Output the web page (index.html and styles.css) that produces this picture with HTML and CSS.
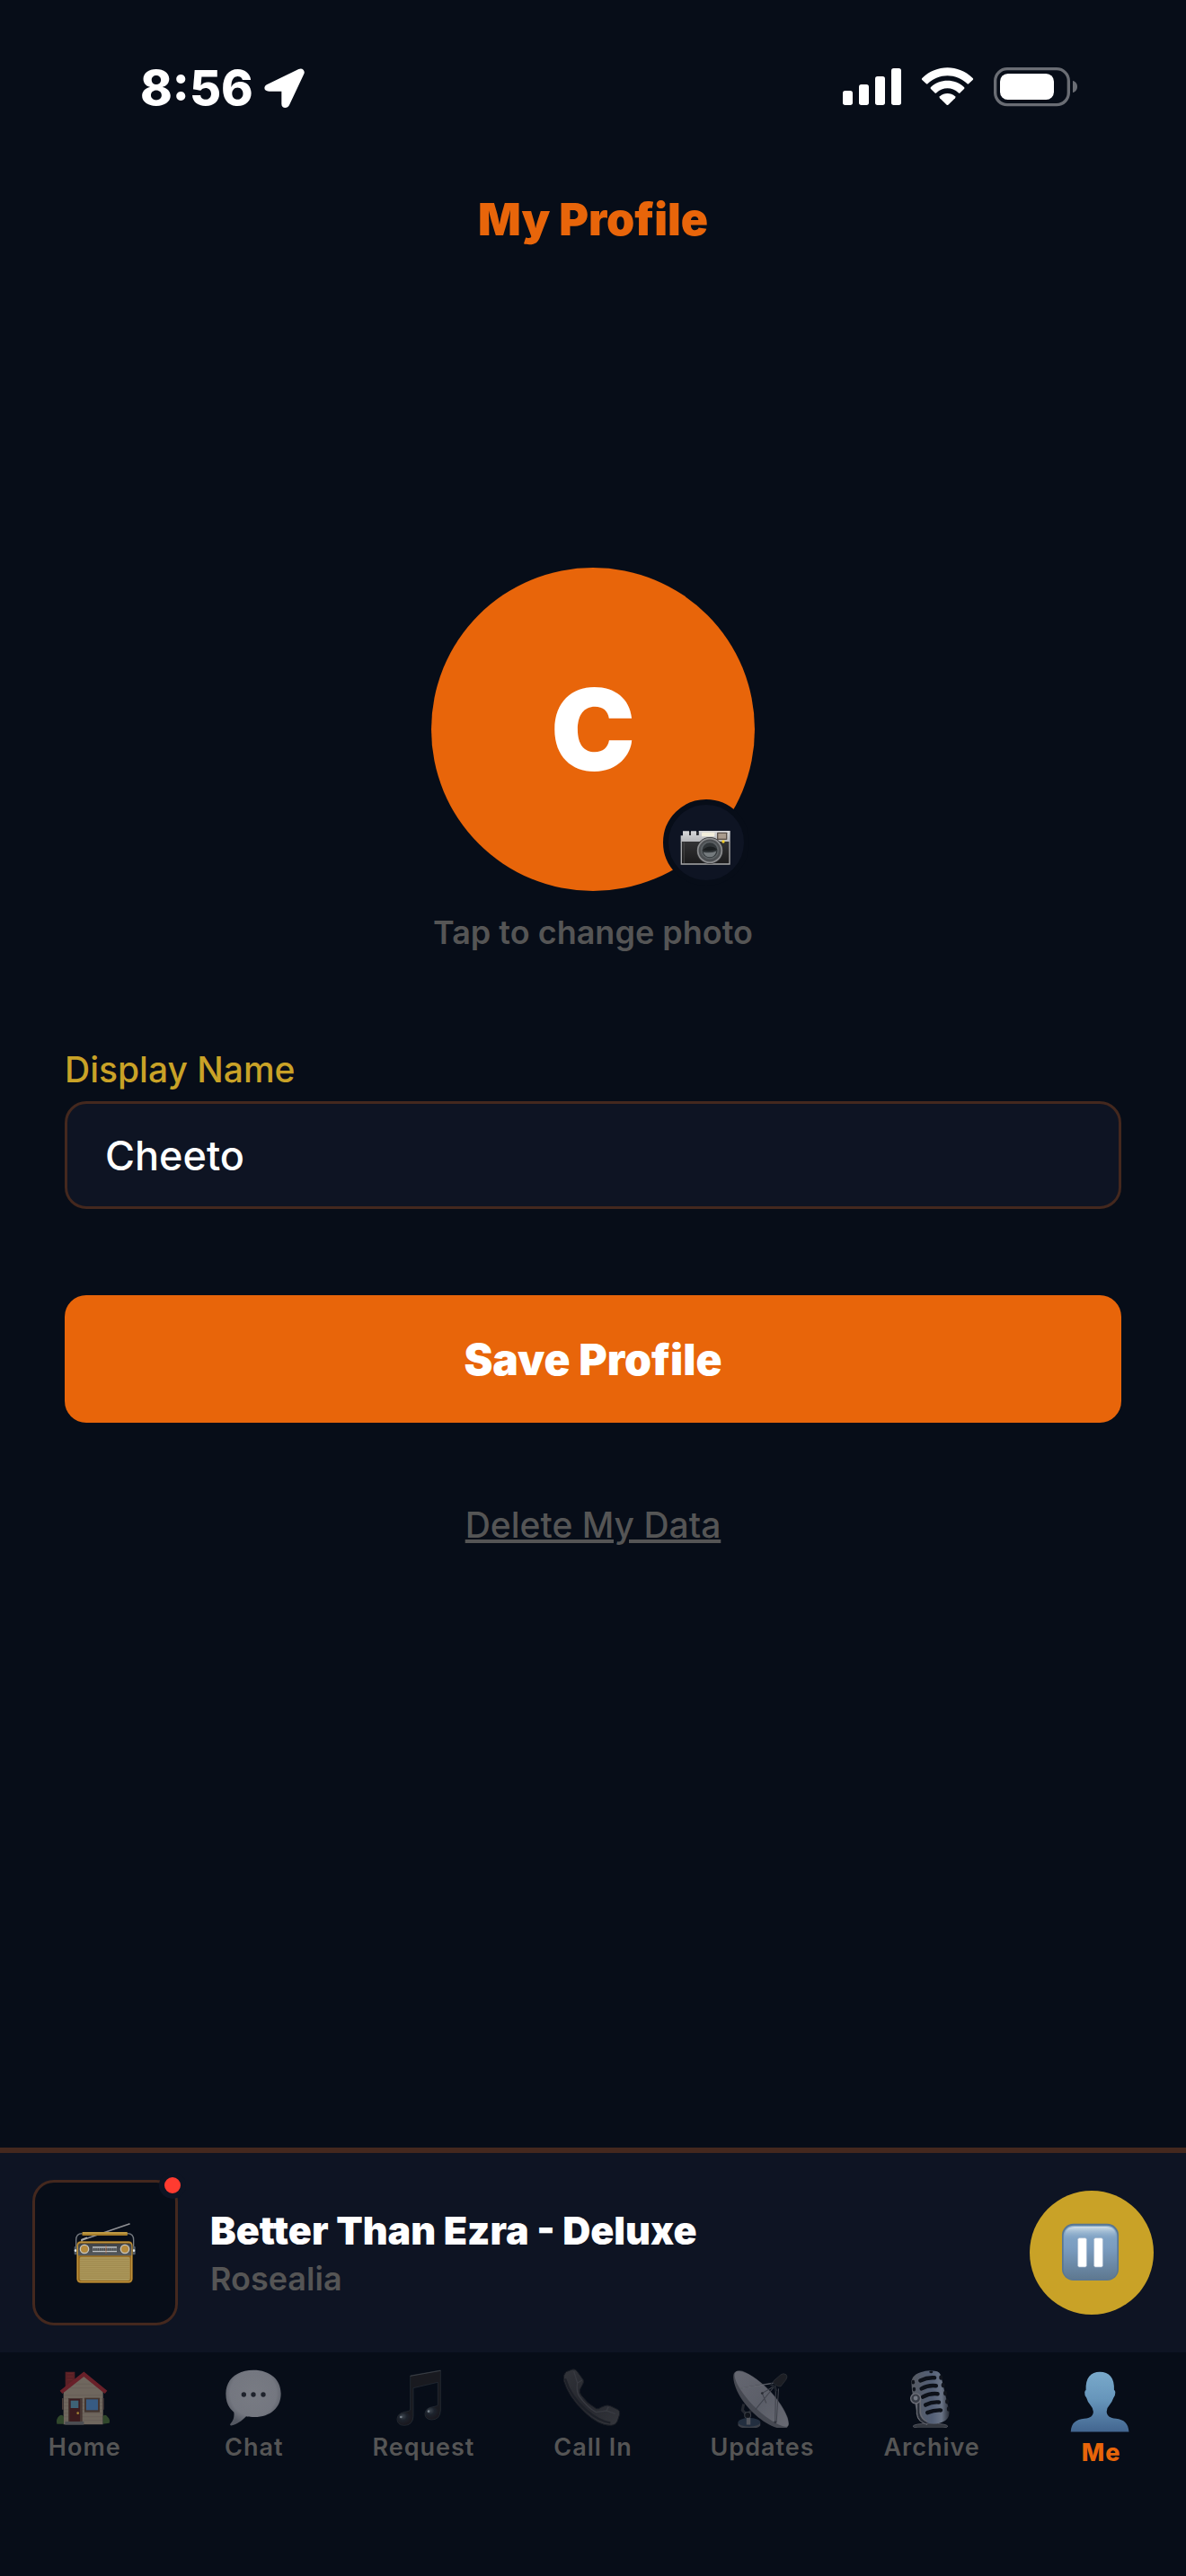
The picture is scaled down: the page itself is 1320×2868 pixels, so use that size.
FILE: index.html
```html
<!DOCTYPE html>
<html lang="en">
<head>
<meta charset="utf-8">
<meta name="viewport" content="width=device-width, initial-scale=1">
<title>My Profile</title>
<link rel="stylesheet" href="styles.css">
</head>
<body>
<div class="status-bar">
  <div class="clock">
    <span>8:56</span>
    <svg class="location-icon" viewBox="496 75 135 138" aria-hidden="true"><path d="M506 132 L611 81 C623 75 634 85 629 97 L580 201 C574 214 554 213 554 197 V155 H512 C495 155 492 139 506 132Z" fill="#fff"/></svg>
  </div>
  <svg class="status-icons" viewBox="81 75 783 138" aria-hidden="true">
    <g fill="#fff">
      <rect x="81" y="153" width="33" height="48" rx="8"/><rect x="135" y="132" width="33" height="69" rx="8"/><rect x="189" y="105" width="33" height="96" rx="8"/><rect x="243" y="78" width="33" height="123" rx="8"/>
      <path d="M346 111 Q343 114 346 117 L359 129 Q362 132 365 129 C402 94 459 94 496 129 Q499 132 502 129 L515 117 Q518 114 515 111 C467 64 394 64 346 111Z"/>
      <path d="M375 141 Q372 144 375 147 L388 160 Q391 163 394 160 C415 140 446 140 467 160 Q470 163 473 160 L486 147 Q489 144 486 141 C455 112 406 112 375 141Z"/>
      <path d="M405 172 Q402 175 405 178 L428 200 Q430.500 202 433 200 L456 178 Q459 175 456 172 C441 159 420 159 405 172Z"/>
      <rect x="606" y="96" width="180" height="87" rx="26"/>
    </g>
    <g fill="#6a6d74"><path d="M849 120 C869 124 869 155 849 159Z"/></g>
    <rect x="590" y="80" width="245" height="120" rx="40" fill="none" stroke="#6a6d74" stroke-width="10"/>
  </svg>
</div>

<header class="page-header"><h1>My Profile</h1></header>

<main class="profile">
  <button class="avatar" type="button" aria-label="Change photo">
    <span class="avatar-initial">C</span>
    <span class="camera-badge">
      <svg viewBox="852 108 252 252" aria-hidden="true">
        <defs>
          <linearGradient id="camTop" x1="0" y1="0" x2="0" y2="1"><stop offset="0" stop-color="#d8d8da"/><stop offset="1" stop-color="#b4b5b8"/></linearGradient>
          <linearGradient id="camBody" x1="0" y1="0" x2="0" y2="1"><stop offset="0" stop-color="#333335"/><stop offset="1" stop-color="#19191a"/></linearGradient>
        </defs>
        <path d="M900 196 H921 V209 H927 V196 H945 V209 H953 V195 H1058 V233 H893 V211 H900Z" fill="url(#camTop)"/>
        <path d="M921 198h6v12h-6zM945 198h7v12h-7z" fill="#2b2c30"/>
        <rect x="963" y="200" width="43" height="14" rx="2" fill="#f2eedc"/>
        <rect x="1014" y="200" width="34" height="25" rx="2" fill="#5b5149"/><rect x="1018" y="204" width="26" height="17" fill="#a99b8d"/>
        <rect x="893" y="231" width="165" height="78" fill="url(#camBody)"/>
        <path d="M895 231V306H1056V231" fill="none" stroke="#a7a8aa" stroke-width="4"/>
        <path d="M904 233V303" stroke="#555" stroke-width="2"/>
        <circle cx="990" cy="261" r="45" fill="#303133"/><circle cx="990" cy="261" r="40" fill="#4c4f52" stroke="#8c8d8f" stroke-width="5"/>
        <circle cx="990" cy="260" r="28" fill="#303538" stroke="#5c6164" stroke-width="5"/>
        <path d="M966 260q24-23 49-3q-18 7-49 3z" fill="#1a1e20"/><path d="M968 266q24 5 44-3q-5 19-22 20q-16 0-22-17z" fill="#747a7d"/>
        <circle cx="1035" cy="231" r="5" fill="#f4cf27"/>
      </svg>
    </span>
  </button>
  <p class="hint">Tap to change photo</p>
  <form class="profile-form">
    <label for="display-name">Display Name</label>
    <input id="display-name" type="text" value="Cheeto">
    <button class="save" type="button">Save Profile</button>
  </form>
  <a class="delete-link" href="#delete">Delete My Data</a>
</main>

<section class="player" aria-label="Now playing">
  <div class="artwork">
    <svg viewBox="240 303 222 222" aria-hidden="true">
      <defs><linearGradient id="radioTop" x1="0" y1="0" x2="0" y2="1"><stop offset="0" stop-color="#3e4145"/><stop offset="1" stop-color="#55595c"/></linearGradient></defs>
      <path d="M276 371L432 318" stroke="#909195" stroke-width="5" stroke-linecap="round"/><path d="M273 379v-8l18-7" fill="none" stroke="#aaa" stroke-width="5"/>
      <path d="M254 402V372Q254 350 274 350M446 402V372Q446 350 426 350" fill="none" stroke="#777c82" stroke-width="4"/>
      <rect x="274" y="345" width="152" height="12" rx="3" fill="#a67e2b"/><path d="M276 348H424" stroke="#d5b45d" stroke-width="3"/>
      <rect x="248" y="393" width="10" height="28" rx="3" fill="#55606b"/><rect x="442" y="393" width="10" height="28" rx="3" fill="#55606b"/><circle cx="252" cy="407" r="4" fill="#e0e5e8"/><circle cx="447" cy="407" r="4" fill="#e0e5e8"/>
      <rect x="256" y="376" width="187" height="139" rx="13" fill="#97691c"/>
      <rect x="259" y="379" width="181" height="133" rx="10" fill="none" stroke="#c79c46" stroke-width="3"/>
      <path d="M261 424V392Q261 383 270 383H430Q439 383 439 392V424Z" fill="url(#radioTop)"/>
      <rect x="266" y="428" width="168" height="79" rx="6" fill="#ac985b"/>
      <path d="M267 436H433M267 443H433M267 450H433M267 457H433M267 464H433M267 471H433M267 478H433M267 485H433M267 492H433M267 499H433" stroke="#9a8348" stroke-width="2"/>
      <g fill="#b68a3c" stroke="#c9c6bd" stroke-width="4"><circle cx="282" cy="402" r="14"/><circle cx="417" cy="402" r="14"/></g>
      <path d="M309 396H390M309 410H390" stroke="#c0c2c3" stroke-width="4"/><path d="M309 401H390M309 405H390" stroke="#85898c" stroke-width="3" stroke-dasharray="3 4"/><path d="M354 390V417" stroke="#b86a41" stroke-width="2"/>
    </svg>
    <span class="live-dot"></span>
  </div>
  <div class="track"><p class="track-title">Better Than Ezra - Deluxe</p><p class="track-artist">Rosealia</p></div>
  <button class="pause" type="button" aria-label="Pause">
    <svg viewBox="540 309 210 210" aria-hidden="true">
      <defs>
        <linearGradient id="pauseFace" x1="0" y1="0" x2="0" y2="1"><stop offset="0" stop-color="#84a8c8"/><stop offset=".4" stop-color="#7b9dc1"/><stop offset="1" stop-color="#5e7890"/></linearGradient>
        <linearGradient id="pauseShine" x1="0" y1="0" x2="0" y2="1"><stop offset="0" stop-color="#d3e0e9"/><stop offset="1" stop-color="#84a7c7" stop-opacity="0"/></linearGradient>
      </defs>
      <rect x="546" y="317" width="189" height="190" rx="38" fill="#587693"/><rect x="551" y="323" width="179" height="181" rx="34" fill="url(#pauseFace)"/>
      <path d="M555 370V360Q555 327 590 327H692Q726 327 726 360V370Z" fill="url(#pauseShine)"/>
      <g fill="#fff" stroke="#b1c0d2" stroke-width="2"><rect x="599" y="365" width="29" height="97" rx="5"/><rect x="653" y="365" width="29" height="97" rx="5"/></g>
    </svg>
  </button>
</section>

<nav class="tab-bar" aria-label="Main">
  <a href="#home"><svg viewBox="183 111 198 198" aria-hidden="true">
    <path d="M218 122H250V155L218 180Z" fill="#592025"/><path d="M224 128h20M224 138h20M224 148h18" stroke="#702a2e" stroke-width="2"/>
    <path d="M212 298V184L280 132L344 184V298Z" fill="#6f675e"/><path d="M214 200H342M214 212H342M214 224H342M214 236H342M214 248H342M214 260H342M214 272H342M214 284H342M235 176H322M252 163H306" stroke="#625b54" stroke-width="1.500"/>
    <path d="M204 190L280 130L354 190" fill="none" stroke="#692029" stroke-width="13" stroke-linejoin="miter"/>
    <path d="M207 210h5v38h-5zM343 210h4v38h-4z" fill="#493c39"/>
    <rect x="228" y="210" width="47" height="78" fill="#473733"/><rect x="232" y="213" width="35" height="75" fill="#3b1b1e"/><rect x="236" y="218" width="26" height="25" fill="#3e6276"/><circle cx="260" cy="260" r="4" fill="#a18132"/>
    <rect x="282" y="209" width="51" height="48" fill="#443630"/><rect x="288" y="214" width="39" height="36" fill="#375b83"/>
    <path d="M190 296Q186 280 197 270Q207 262 213 272V296ZM344 296V269Q353 263 359 272Q369 281 365 293Z" fill="#30472b"/><path d="M217 288h63v11h-63z" fill="#4b4d52"/>
  </svg><span>Home</span></a>
  <a href="#chat"><svg viewBox="750 111 198 198" aria-hidden="true">
    <defs><radialGradient id="bubble" cx=".5" cy=".42" r=".58"><stop offset="0" stop-color="#787b83"/><stop offset=".72" stop-color="#747780"/><stop offset="1" stop-color="#545862"/></radialGradient></defs>
    <path d="M846 116C902 116 938 148 938 195C938 242 903 273 850 273C840 273 831 273 822 271C808 286 789 299 775 301Q766 302 769 296C780 285 783 271 781 257C763 243 754 222 754 195C754 148 790 116 846 116Z" fill="url(#bubble)"/><g fill="#1f232c"><circle cx="814" cy="198" r="8"/><circle cx="846" cy="198" r="8"/><circle cx="879" cy="198" r="8"/></g>
  </svg><span>Chat</span></a>
  <a href="#request"><svg viewBox="115 111 198 198" aria-hidden="true">
    <defs><radialGradient id="note" cx=".35" cy=".3" r=".8"><stop offset="0" stop-color="#3e464f"/><stop offset=".4" stop-color="#1c222c"/><stop offset="1" stop-color="#18151b"/></radialGradient></defs>
    <path d="M171 135L272 117V252Q270 282 242 282Q220 281 220 262Q221 242 247 239Q258 238 263 233V157L181 176V271Q179 301 150 301Q127 300 127 280Q128 260 153 256Q167 255 171 249Z" fill="#191a20" stroke="#28313a" stroke-width="2"/>
    <ellipse cx="152" cy="279" rx="23" ry="20" fill="url(#note)"/><ellipse cx="244" cy="260" rx="23" ry="20" fill="url(#note)"/><path d="M171 136L272 118" stroke="#393d44" stroke-width="3"/><circle cx="140" cy="273" r="4" fill="#757f88"/><circle cx="232" cy="254" r="4" fill="#757f88"/>
  </svg><span>Request</span></a>
  <a href="#call"><svg viewBox="681 111 198 198" aria-hidden="true">
    <defs><linearGradient id="phone" x1="0" y1="0" x2="1" y2="1"><stop offset="0" stop-color="#32343a"/><stop offset=".5" stop-color="#25272e"/><stop offset="1" stop-color="#34363c"/></linearGradient></defs>
    <path d="M690 122L711 114Q721 112 726 119L747 148Q751 155 746 163L736 182Q734 191 740 199Q760 228 791 245Q799 247 806 241L821 235Q828 232 838 236L863 248Q871 253 869 264L862 286Q857 300 840 301Q798 302 749 254Q698 205 682 151Q680 131 690 122Z" fill="url(#phone)" stroke="#171b23" stroke-width="3"/>
    <path d="M687 145Q705 205 759 251Q799 287 838 292" fill="none" stroke="#1d2028" stroke-width="7"/><path d="M716 120L728 159Q723 188 735 205Q759 239 790 257L825 252L855 262M728 159L744 150M825 252L832 239" fill="none" stroke="#383a41" stroke-width="4"/>
  </svg><span>Call In</span></a>
  <a href="#updates"><svg viewBox="103 107 192 192" aria-hidden="true">
    <defs><linearGradient id="dish" x1="0" y1="0" x2="1" y2="1"><stop offset="0" stop-color="#656771"/><stop offset=".55" stop-color="#5b5e68"/><stop offset="1" stop-color="#686a73"/></linearGradient></defs>
    <path d="M137 222L133 242L149 259L160 244" fill="none" stroke="#242830" stroke-width="9"/><circle cx="150" cy="258" r="10" fill="#10141b" stroke="#3a3e46" stroke-width="3"/>
    <path d="M119 281V291C124 305 187 305 191 291V281Z" fill="#3b3f48"/><ellipse cx="155" cy="281" rx="36" ry="14" fill="#222e3f"/><path d="M146 267h13v22h-13z" fill="#51545c"/>
    <path d="M105 124C111 112 126 110 146 121C200 148 261 213 280 267Q288 300 269 302C220 305 153 246 124 196C106 164 101 137 105 124Z" fill="#464952"/>
    <path d="M116 116C140 111 181 139 220 179C262 222 286 274 282 290C278 302 250 292 218 269C163 231 113 166 108 133Q106 119 116 116Z" fill="url(#dish)"/>
    <path d="M128 171L236 153M197 187L238 163L176 239M241 164L239 281M250 172L243 282M197 187L210 219" fill="none" stroke="#40434c" stroke-width="3"/><path d="M128 171L232 155" stroke="#787a82" stroke-width="2"/>
    <path d="M233 148L257 127Q265 121 274 126Q281 133 274 143L257 165Q248 166 243 161Q232 158 233 148Z" fill="#1c1e24" stroke="#30343b" stroke-width="2"/><path d="M224 157l15 12 4 12" fill="none" stroke="#20252e" stroke-width="8"/><circle cx="197" cy="187" r="4" fill="#292c34"/><circle cx="239" cy="281" r="4" fill="#30333c"/>
  </svg><span>Updates</span></a>
  <a href="#archive"><svg viewBox="651 107 192 192" aria-hidden="true">
    <defs><linearGradient id="mic" x1="0" y1="0" x2="1" y2="0"><stop offset="0" stop-color="#555961"/><stop offset=".55" stop-color="#535f76"/><stop offset=".8" stop-color="#6a7486"/><stop offset="1" stop-color="#292e38"/></linearGradient></defs>
    <path d="M686 294Q690 285 743 285Q795 285 799 294Q798 302 743 302Q688 302 686 294Z" fill="#343840" stroke="#60626b" stroke-width="2"/>
    <path d="M681 148Q686 126 711 119Q734 111 757 115Q774 117 777 132L803 242Q807 263 791 276Q764 292 731 283Q705 278 698 246L683 179Z" fill="url(#mic)"/>
    <g fill="none" stroke="#0d1119" stroke-width="13" stroke-linecap="round"><path d="M710 146Q733 135 756 137M714 172Q736 160 761 163M718 199Q741 186 766 189M727 225Q748 214 770 216M733 250Q754 241 776 242"/></g>
    <g fill="#10141c"><ellipse cx="687" cy="151" rx="5" ry="7"/><ellipse cx="690" cy="174" rx="5" ry="7"/><ellipse cx="745" cy="118" rx="6" ry="4"/><ellipse cx="777" cy="136" rx="6" ry="8"/><ellipse cx="784" cy="161" rx="6" ry="8"/><ellipse cx="791" cy="187" rx="6" ry="8"/><ellipse cx="797" cy="214" rx="6" ry="8"/><ellipse cx="801" cy="238" rx="5" ry="8"/></g>
    <path d="M699 212V254Q702 280 733 288M710 208V248Q713 270 732 280" fill="none" stroke="#686a72" stroke-width="4"/><path d="M704 213V251Q708 275 731 284" fill="none" stroke="#282d37" stroke-width="6"/>
    <circle cx="695" cy="204" r="16" fill="#383d47" stroke="#6e7079" stroke-width="4"/><circle cx="695" cy="203" r="7" fill="#747984"/>
  </svg><span>Archive</span></a>
  <a class="active" href="#me" aria-current="page"><svg viewBox="1190 110 209 209" aria-hidden="true">
    <defs><linearGradient id="person" x1="0" y1="0" x2="0" y2="1"><stop offset="0" stop-color="#79a9ca"/><stop offset=".45" stop-color="#6796bb"/><stop offset="1" stop-color="#42658f"/></linearGradient></defs>
    <path d="M1195 315C1197 285 1212 275 1239 272C1259 270 1268 262 1268 249Q1268 239 1259 229Q1250 220 1246 205Q1239 198 1240 187Q1241 181 1244 180C1242 140 1260 121 1289 121C1319 121 1337 140 1335 180Q1339 181 1339 188Q1339 199 1333 205Q1328 220 1319 230Q1310 239 1311 249C1311 262 1322 270 1341 272C1367 275 1381 287 1383 315Z" fill="url(#person)"/>
  </svg><span>Me</span></a>
</nav>
</body>
</html>
```

FILE: styles.css
```css
:root {
  --bg: #070d18;
  --surface: #0e1423;
  --orange: #e8650a;
  --gold: #c9a227;
  --line: #44281e;
  --muted: #555555;
}

* { box-sizing: border-box; }

body {
  display: flex;
  flex-direction: column;
  min-height: 100vh;
  margin: 0;
  background: var(--bg);
  color: #fff;
  font-family: Inter, "Liberation Sans", sans-serif;
}

h1, p { margin: 0; }
button, input { font: inherit; color: inherit; }
button { padding: 0; border: 0; cursor: pointer; }
svg { display: block; flex: none; }

.status-bar {
  display: flex;
  align-items: center;
  justify-content: space-between;
  padding: 66px 121px 46px 156px;
}
.clock {
  display: flex;
  align-items: center;
  gap: 12px;
  font-size: 54px;
  font-weight: 800;
  line-height: 64px;
}
.location-icon { width: 45px; height: 46px; }
.status-icons { width: 261px; height: 46px; }

.page-header { padding: 38px 72px 36px; text-align: center; }
.page-header h1 {
  color: var(--orange);
  font-size: 50px;
  font-weight: 900;
  line-height: 60px;
}

.profile {
  display: flex;
  flex: 1;
  flex-direction: column;
  align-items: center;
  padding: 322px 72px 96px;
}
.avatar {
  position: relative;
  width: 360px;
  height: 360px;
  border-radius: 50%;
  background: var(--orange);
}
.avatar-initial { font-size: 126px; font-weight: 900; line-height: 160px; }
.camera-badge {
  position: absolute;
  right: 6px;
  bottom: 6px;
  width: 96px;
  height: 96px;
  border: 6px solid var(--bg);
  border-radius: 50%;
  background: var(--surface);
}
.hint {
  margin-top: 24px;
  color: var(--muted);
  font-size: 36px;
  font-weight: 600;
  line-height: 44px;
}
.profile-form {
  display: flex;
  flex-direction: column;
  align-self: stretch;
  margin-top: 107px;
}
.profile-form label {
  color: var(--gold);
  font-size: 39px;
  font-weight: 500;
  line-height: 48px;
}
.profile-form input {
  width: 100%;
  height: 120px;
  margin-top: 11px;
  padding: 0 42px;
  border: 3px solid var(--line);
  border-radius: 24px;
  background: var(--surface);
  font-size: 45px;
  font-weight: 500;
}
.save {
  height: 142px;
  margin-top: 96px;
  border-radius: 24px;
  background: var(--orange);
  font-size: 48px;
  font-weight: 900;
}
.delete-link {
  margin-top: 90px;
  color: var(--muted);
  font-size: 39px;
  font-weight: 500;
  line-height: 48px;
  text-decoration-thickness: 4px;
}

.player {
  display: flex;
  align-items: center;
  gap: 36px;
  padding: 30px 36px;
  border-top: 6px solid var(--line);
  background: var(--surface);
}
.artwork {
  position: relative;
  display: grid;
  flex: none;
  place-items: center;
  width: 162px;
  height: 162px;
  border: 3px solid var(--line);
  border-radius: 24px;
  background: var(--bg);
}
.artwork svg { width: 74px; height: 74px; }
.live-dot {
  position: absolute;
  top: -12px;
  right: -12px;
  width: 30px;
  height: 30px;
  border: 6px solid var(--surface);
  border-radius: 50%;
  background: #ff3b30;
}
.track { flex: 1; min-width: 0; padding-top: 4px; line-height: 54px; }
.track-title { font-size: 43px; font-weight: 900; }
.track-artist { color: var(--muted); font-size: 36px; font-weight: 600; }
.pause {
  display: grid;
  flex: none;
  place-items: center;
  width: 138px;
  height: 138px;
  border-radius: 50%;
  background: var(--gold);
}
.pause svg { width: 70px; height: 70px; }

.tab-bar {
  display: grid;
  grid-template-columns: repeat(7, 1fr);
  padding: 18px 0 119px;
}
.tab-bar a {
  display: flex;
  flex-direction: column;
  align-items: center;
  gap: 4px;
  color: var(--muted);
  font-size: 27px;
  font-weight: 600;
  line-height: 36px;
  letter-spacing: 1px;
  text-decoration: none;
}
.tab-bar svg { width: 66px; height: 66px; }
.tab-bar .active { color: var(--orange); font-weight: 800; }
.tab-bar .active svg { width: 72px; height: 72px; }
```
